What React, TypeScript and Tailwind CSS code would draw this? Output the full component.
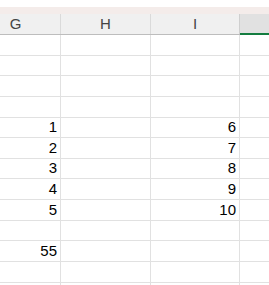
import React from "react";

const rows: [string, string][] = [
  ["", ""],
  ["", ""],
  ["", ""],
  ["", ""],
  ["1", "6"],
  ["2", "7"],
  ["3", "8"],
  ["4", "9"],
  ["5", "10"],
  ["", ""],
  ["55", ""],
  ["", ""],
  ["", ""],
];

export default function App() {
  return (
    <div
      className="w-[269px] h-[285px] overflow-hidden bg-white"
      style={{ fontFamily: '"Liberation Sans Narrow", "Liberation Sans", Arial, sans-serif' }}
    >
      <div className="h-[7px] bg-white" />
      <div className="h-[7px] bg-[#f4ecea]" />
      <div className="flex ml-[-29px] h-[21px] box-border bg-[#f0f0f0] border-b border-[#bdbdbd] text-[15px] text-[#444]">
        <div className="w-[90px] shrink-0 box-border border-r border-[#dadada] flex items-center justify-center pt-[1px]">G</div>
        <div className="w-[90px] shrink-0 box-border border-r border-[#dadada] flex items-center justify-center pt-[1px]">H</div>
        <div className="w-[89px] shrink-0 box-border border-r border-[#cfcfcf] flex items-center justify-center pt-[1px]">I</div>
        <div className="flex-1 bg-[#e1e1e1] relative">
          <div className="absolute left-0 right-0 bottom-[-1px] h-[2px] bg-[#137c3f]" />
        </div>
      </div>
      {rows.map((r, i) => (
        <div key={i} className="flex ml-[-29px] h-[20.625px] box-border border-b border-[#e1e1e1] text-[15px] text-black">
          <div className="w-[90px] shrink-0 box-border border-r border-[#e1e1e1] flex items-end justify-end pr-[3px] pb-[1px] leading-[18px]">{r[0]}</div>
          <div className="w-[90px] shrink-0 box-border border-r border-[#e1e1e1]" />
          <div className="w-[89px] shrink-0 box-border border-r border-[#e1e1e1] flex items-end justify-end pr-[3px] pb-[1px] leading-[18px]">{r[1]}</div>
          <div className="flex-1" />
        </div>
      ))}
    </div>
  );
}
